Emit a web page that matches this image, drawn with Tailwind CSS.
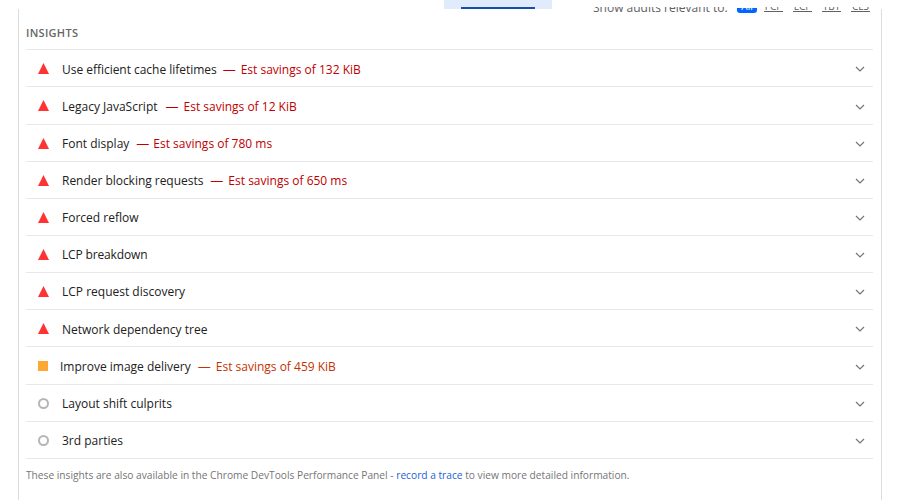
<!DOCTYPE html>
<html lang="en">
<head>
  <meta charset="UTF-8">
  <title>Insights</title>
  <script src="https://cdn.jsdelivr.net/npm/@tailwindcss/browser@4"></script>
</head>
<body class="bg-white font-['Open_Sans',sans-serif] h-[500px] w-[901px] overflow-hidden relative">
  <!-- top strip: tab and filter, cut off by the window edge -->
  <div class="h-[9px] pl-[444px]">
    <div class="w-[108px] h-[9px] bg-[#e0ecfb] pt-[7px] px-[17px]">
      <div class="h-[2px] bg-[#174ea6]"></div>
    </div>
  </div>
  <div class="absolute top-[7px] left-[593px] h-[6px] w-[280px] overflow-hidden">
    <div class="-mt-[7px] flex items-start h-[16px] text-[12px] leading-[16px] text-[#616161] whitespace-nowrap">
      <span class="w-[144px]">Show audits relevant to:</span>
      <span class="mt-[8px] w-[20px] h-[5px] overflow-hidden bg-[#0066ff] rounded-b-[3px]">
        <span class="block -mt-[7px] text-white text-center text-[10px] leading-[10px]">All</span>
      </span>
      <span class="ml-[7px] w-[19px] h-[12px] pt-[1px] border-b border-[#616161] text-center text-[10px] leading-[10px]">FCP</span>
      <span class="ml-[10px] w-[19px] h-[12px] pt-[1px] border-b border-[#616161] text-center text-[10px] leading-[10px]">LCP</span>
      <span class="ml-[10px] w-[19px] h-[12px] pt-[1px] border-b border-[#616161] text-center text-[10px] leading-[10px]">TBT</span>
      <span class="ml-[10px] w-[19px] h-[12px] pt-[1px] border-b border-[#616161] text-center text-[10px] leading-[10px]">CLS</span>
    </div>
  </div>

  <div class="ml-[18px] w-[864px] h-[491px] border-x border-[#dcdcdc] pl-[7px] pr-[8px]">
    <div class="h-[40px] pt-[17px] text-[11px] leading-[14px] font-semibold tracking-[0.3px] text-[#666666]">INSIGHTS</div>
    <div class="border-t border-[#e8e8e8]">

      <div class="h-[37px] pt-[2px] flex items-center border-b border-[#e8e8e8] text-[12px] text-[#212121]">
        <svg class="-mt-[2px] ml-[12px] mr-[13px] w-[11px] h-[11px]" viewBox="0 0 11 11"><path d="M5.5 0L11 11H0Z" fill="#ff3333"/></svg>
        <span class="mt-[2px] tracking-[-0.03px]">Use efficient cache lifetimes</span>
        <span class="mt-[2px] ml-[6px] w-[18px] text-[13px] text-[#c00000]">—</span>
        <span class="mt-[2px] text-[#c00000]">Est savings of 132 KiB</span>
        <svg class="ml-auto mr-[8px] w-[10px] h-[10px]" viewBox="0 0 10 10" fill="none" stroke="#757575" stroke-width="1.2"><path d="M1 3l4 4 4-4"/></svg>
      </div>
      <div class="h-[38px] pt-[2px] flex items-center border-b border-[#e8e8e8] text-[12px] text-[#212121]">
        <svg class="-mt-[2px] ml-[12px] mr-[13px] w-[11px] h-[11px]" viewBox="0 0 11 11"><path d="M5.5 0L11 11H0Z" fill="#ff3333"/></svg>
        <span>Legacy JavaScript</span>
        <span class="ml-[8px] w-[18px] text-[13px] text-[#c00000]">—</span>
        <span class="text-[#c00000]">Est savings of 12 KiB</span>
        <svg class="ml-auto mr-[8px] w-[10px] h-[10px]" viewBox="0 0 10 10" fill="none" stroke="#757575" stroke-width="1.2"><path d="M1 3l4 4 4-4"/></svg>
      </div>
      <div class="h-[37px] pt-[2px] flex items-center border-b border-[#e8e8e8] text-[12px] text-[#212121]">
        <svg class="-mt-[2px] ml-[12px] mr-[13px] w-[11px] h-[11px]" viewBox="0 0 11 11"><path d="M5.5 0L11 11H0Z" fill="#ff3333"/></svg>
        <span>Font display</span>
        <span class="ml-[7px] w-[17px] text-[13px] text-[#c00000]">—</span>
        <span class="text-[#c00000]">Est savings of 780 ms</span>
        <svg class="ml-auto mr-[8px] w-[10px] h-[10px]" viewBox="0 0 10 10" fill="none" stroke="#757575" stroke-width="1.2"><path d="M1 3l4 4 4-4"/></svg>
      </div>
      <div class="h-[37px] pt-[2px] flex items-center border-b border-[#e8e8e8] text-[12px] text-[#212121]">
        <svg class="-mt-[2px] ml-[12px] mr-[13px] w-[11px] h-[11px]" viewBox="0 0 11 11"><path d="M5.5 0L11 11H0Z" fill="#ff3333"/></svg>
        <span class="tracking-[-0.03px]">Render blocking requests</span>
        <span class="ml-[7px] w-[18px] text-[13px] text-[#c00000]">—</span>
        <span class="text-[#c00000]">Est savings of 650 ms</span>
        <svg class="ml-auto mr-[8px] w-[10px] h-[10px]" viewBox="0 0 10 10" fill="none" stroke="#757575" stroke-width="1.2"><path d="M1 3l4 4 4-4"/></svg>
      </div>
      <div class="h-[37px] pt-[2px] flex items-center border-b border-[#e8e8e8] text-[12px] text-[#212121]">
        <svg class="-mt-[2px] ml-[12px] mr-[13px] w-[11px] h-[11px]" viewBox="0 0 11 11"><path d="M5.5 0L11 11H0Z" fill="#ff3333"/></svg>
        <span>Forced reflow</span>
        <svg class="ml-auto mr-[8px] w-[10px] h-[10px]" viewBox="0 0 10 10" fill="none" stroke="#757575" stroke-width="1.2"><path d="M1 3l4 4 4-4"/></svg>
      </div>
      <div class="h-[37px] pt-[2px] flex items-center border-b border-[#e8e8e8] text-[12px] text-[#212121]">
        <svg class="-mt-[2px] ml-[12px] mr-[13px] w-[11px] h-[11px]" viewBox="0 0 11 11"><path d="M5.5 0L11 11H0Z" fill="#ff3333"/></svg>
        <span class="tracking-[-0.15px]">LCP breakdown</span>
        <svg class="ml-auto mr-[8px] w-[10px] h-[10px]" viewBox="0 0 10 10" fill="none" stroke="#757575" stroke-width="1.2"><path d="M1 3l4 4 4-4"/></svg>
      </div>
      <div class="h-[37px] pt-[2px] flex items-center border-b border-[#e8e8e8] text-[12px] text-[#212121]">
        <svg class="-mt-[2px] ml-[12px] mr-[13px] w-[11px] h-[11px]" viewBox="0 0 11 11"><path d="M5.5 0L11 11H0Z" fill="#ff3333"/></svg>
        <span>LCP request discovery</span>
        <svg class="ml-auto mr-[8px] w-[10px] h-[10px]" viewBox="0 0 10 10" fill="none" stroke="#757575" stroke-width="1.2"><path d="M1 3l4 4 4-4"/></svg>
      </div>
      <div class="h-[37px] pt-[2px] flex items-center border-b border-[#e8e8e8] text-[12px] text-[#212121]">
        <svg class="-mt-[2px] ml-[12px] mr-[13px] w-[11px] h-[11px]" viewBox="0 0 11 11"><path d="M5.5 0L11 11H0Z" fill="#ff3333"/></svg>
        <span class="mt-[2px]">Network dependency tree</span>
        <svg class="ml-auto mr-[8px] w-[10px] h-[10px]" viewBox="0 0 10 10" fill="none" stroke="#757575" stroke-width="1.2"><path d="M1 3l4 4 4-4"/></svg>
      </div>
      <div class="h-[38px] pt-[2px] flex items-center border-b border-[#e8e8e8] text-[12px] text-[#212121]">
        <div class="-mt-[2px] ml-[12px] mr-[12px] w-[10px] h-[10px] bg-[#ffa733]"></div>
        <span>Improve image delivery</span>
        <span class="ml-[7px] w-[18px] text-[13px] text-[#c33300]">—</span>
        <span class="text-[#c33300]">Est savings of 459 KiB</span>
        <svg class="ml-auto mr-[8px] w-[10px] h-[10px]" viewBox="0 0 10 10" fill="none" stroke="#757575" stroke-width="1.2"><path d="M1 3l4 4 4-4"/></svg>
      </div>
      <div class="h-[37px] pt-[2px] flex items-center border-b border-[#e8e8e8] text-[12px] text-[#212121]">
        <div class="-mt-[2px] ml-[12px] mr-[13px] w-[11px] h-[11px] rounded-full border-2 border-[#b5b5b5]"></div>
        <span>Layout shift culprits</span>
        <svg class="ml-auto mr-[8px] w-[10px] h-[10px]" viewBox="0 0 10 10" fill="none" stroke="#757575" stroke-width="1.2"><path d="M1 3l4 4 4-4"/></svg>
      </div>
      <div class="h-[37px] pt-[2px] flex items-center border-b border-[#e8e8e8] text-[12px] text-[#212121]">
        <div class="-mt-[2px] ml-[12px] mr-[13px] w-[11px] h-[11px] rounded-full border-2 border-[#b5b5b5]"></div>
        <span>3rd parties</span>
        <svg class="ml-auto mr-[8px] w-[10px] h-[10px]" viewBox="0 0 10 10" fill="none" stroke="#757575" stroke-width="1.2"><path d="M1 3l4 4 4-4"/></svg>
      </div>
    </div>
    <p class="mt-[9px] text-[10.2px] leading-[14px] text-[#757575]">These insights are also available in the Chrome DevTools Performance Panel - <a class="text-[#1a5fd8]">record a trace</a> to view more detailed information.</p>
  </div>
</body>
</html>
